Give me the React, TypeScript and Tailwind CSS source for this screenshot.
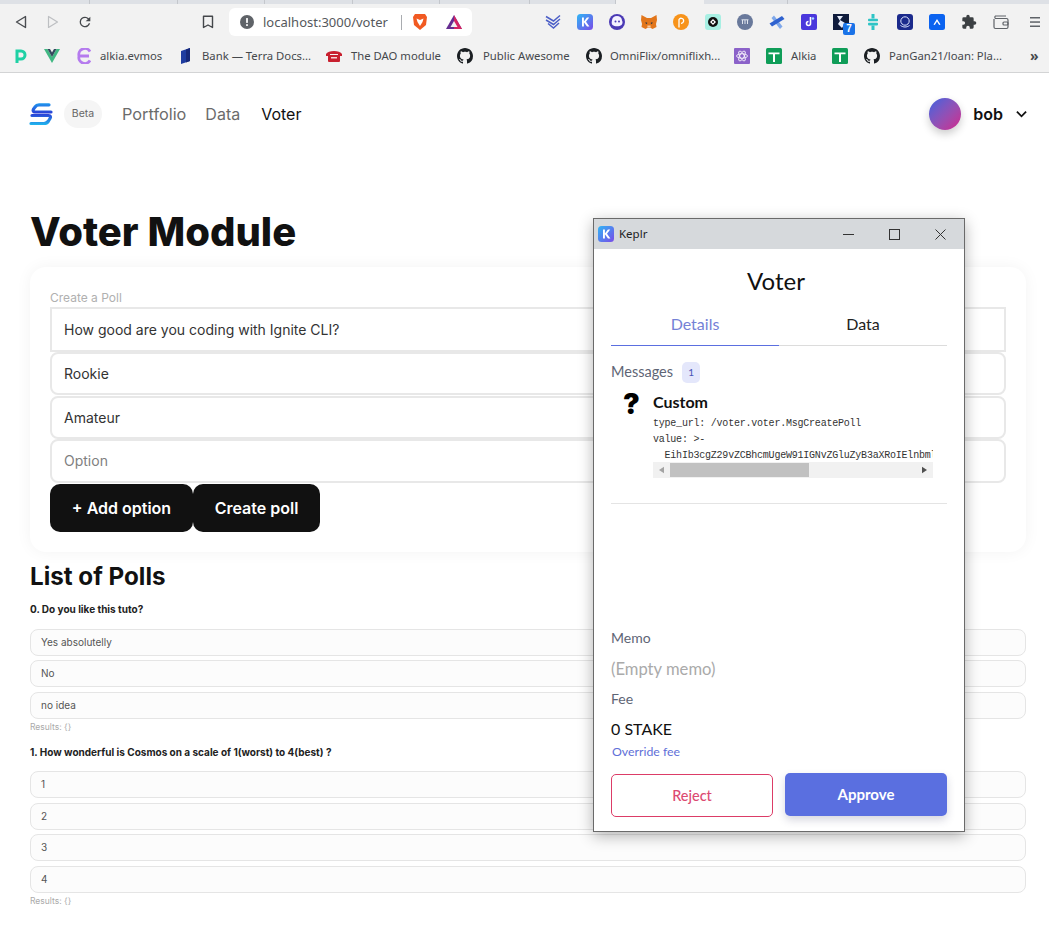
import React from "react";

const Gh = () => (
  <svg viewBox="0 0 16 16" className="w-[16px] h-[16px] shrink-0" fill="#1b1f23">
    <path d="M8 0C3.58 0 0 3.58 0 8c0 3.54 2.29 6.53 5.47 7.59.4.07.55-.17.55-.38 0-.19-.01-.82-.01-1.49-2.01.37-2.53-.49-2.69-.94-.09-.23-.48-.94-.82-1.13-.28-.15-.68-.52-.01-.53.63-.01 1.08.58 1.23.82.72 1.21 1.87.87 2.33.66.07-.52.28-.87.51-1.07-1.78-.2-3.64-.89-3.64-3.95 0-.87.31-1.59.82-2.15-.08-.2-.36-1.02.08-2.12 0 0 .67-.21 2.2.82.64-.18 1.32-.27 2-.27s1.36.09 2 .27c1.53-1.04 2.2-.82 2.2-.82.44 1.1.16 1.92.08 2.12.51.56.82 1.27.82 2.15 0 3.07-1.87 3.75-3.65 3.95.29.25.54.73.54 1.48 0 1.07-.01 1.93-.01 2.2 0 .21.15.46.55.38A8.01 8.01 0 0016 8c0-4.42-3.58-8-8-8z" />
  </svg>
);

const GreenT = () => (
  <svg viewBox="0 0 16 16" className="w-[16px] h-[16px] shrink-0">
    <rect width="16" height="16" rx="1.5" fill="#0f9d58" />
    <path d="M2.500 4.500h11v1.800H9V14H7V6.300H2.500z" fill="#fff" />
  </svg>
);

const KeplrIcon = ({ s, id }: { s: number; id: string }) => (
  <svg viewBox="0 0 16 16" style={{ width: s, height: s }} className="shrink-0">
    <defs>
      <linearGradient id={id} x1="0" y1="0" x2="1" y2="1">
        <stop offset="0" stopColor="#2fb6f5" />
        <stop offset="1" stopColor="#7a4be8" />
      </linearGradient>
    </defs>
    <rect width="16" height="16" rx="3.500" fill={`url(#${id})`} />
    <path d="M5 3.500h1.900v3.900l3-3.900h2.300L9 7.800l3.400 4.700h-2.400L6.900 8.200v4.300H5z" fill="#fff" />
  </svg>
);

const ExtIcons = () => (
  <div className="flex items-center gap-[16px]">
    <svg viewBox="0 0 16 16" className="w-[16px] h-[16px] shrink-0" fill="none" stroke="#4c5fc7" strokeWidth="1.500">
      <path d="M1 2.500 8.500 7 15 1.500M1 6 8.500 10.500 15 5M3 9.500 8.500 14 14 9" />
    </svg>
    <KeplrIcon s={16} id="kg1" />
    <svg viewBox="0 0 16 16" className="w-[16px] h-[16px] shrink-0">
      <circle cx="8" cy="8" r="8" fill="#4b3ab5" />
      <path d="M3 6.500a5 4.500 0 0 1 10 0c1 1.500.5 3.500-.5 4.500-2 1.800-7 1.800-9 0-1-1-1-3-.5-4.500z" fill="#f4f1ff" />
      <circle cx="6.500" cy="7.500" r="1" fill="#4b3ab5" />
      <circle cx="10" cy="7.500" r="1" fill="#4b3ab5" />
    </svg>
    <svg viewBox="0 0 16 16" className="w-[16px] h-[16px] shrink-0">
      <path d="M.500 1 6 4h4l5.500-3L16 6l-1 4 .500 3-4 2-2-1.200H6.500l-2 1.200-4-2 .500-3-1-4z" fill="#e2761b" />
      <path d="M4.500 8l2 1-1.500 1.200zM11.500 8l-2 1 1.500 1.200z" fill="#233447" />
      <path d="M6.500 13.500h3l.200-2H6.300z" fill="#f6c9a0" />
    </svg>
    <svg viewBox="0 0 16 16" className="w-[16px] h-[16px] shrink-0">
      <circle cx="8" cy="8" r="8" fill="#f7931a" />
      <path d="M6 13.500V5.500a2.500 2.500 0 1 1 2 3.800" fill="none" stroke="#fff" strokeWidth="1.300" />
    </svg>
    <svg viewBox="0 0 16 16" className="w-[16px] h-[16px] shrink-0">
      <rect width="16" height="16" rx="3" fill="#a8efe3" />
      <circle cx="8" cy="8" r="5" fill="#111" />
      <path d="M8 5 11 8 8 11 5 8z" fill="#fff" />
      <circle cx="8" cy="8" r="1" fill="#111" />
    </svg>
    <svg viewBox="0 0 16 16" className="w-[16px] h-[16px] shrink-0">
      <circle cx="8" cy="8" r="8" fill="#69799b" />
      <path d="M5.500 6v4M8 6v4M10.500 6v4M4.500 5.800h7" stroke="#dfe4ee" strokeWidth="1" />
    </svg>
    <svg viewBox="0 0 16 16" className="w-[16px] h-[16px] shrink-0">
      <path d="M5 1.500 13.500 12.500 11 15 2.500 4z" fill="#7fa8ea" />
      <path d="M.5 9.500 13 2l2.500 3L3 12.500z" fill="#2f62cf" />
    </svg>
    <svg viewBox="0 0 16 16" className="w-[16px] h-[16px] shrink-0">
      <rect width="16" height="16" rx="2" fill="#4a37dc" />
      <path d="M9.500 3v6.500a2 2 0 1 1-2-2" fill="none" stroke="#fff" strokeWidth="1.600" />
      <circle cx="12" cy="4.500" r="1.200" fill="#a8dcff" />
    </svg>
    <div className="relative w-[16px] h-[16px] shrink-0">
      <svg viewBox="0 0 16 16" className="w-[16px] h-[16px]">
        <rect width="16" height="16" fill="#101c3c" />
        <path d="M4 2h6l-3 4 5 3-3 5-4-4 2-3z" fill="#e8eefb" />
      </svg>
      <div className="absolute left-[10px] top-[9px] w-[12px] h-[12px] rounded-[2px] bg-[#1a73e8] text-white text-[10px] font-bold leading-[12px] text-center font-['Liberation_Sans',sans-serif]">7</div>
    </div>
    <svg viewBox="0 0 16 16" className="w-[16px] h-[16px] shrink-0" fill="#2ec4c6">
      <rect x="6.500" y="0" width="3" height="4.500" />
      <rect x="6.500" y="11.500" width="3" height="4.500" />
      <rect x="3" y="4.700" width="10" height="2.600" rx=".8" />
      <rect x="3" y="8.800" width="10" height="2.600" rx=".8" />
    </svg>
    <svg viewBox="0 0 16 16" className="w-[16px] h-[16px] shrink-0">
      <rect width="16" height="16" rx="3" fill="#1b2a8c" />
      <circle cx="8" cy="7" r="4.200" fill="none" stroke="#dfe6ff" strokeWidth="1" />
      <path d="M3.500 11.500c3 2 6 2 9 0" fill="none" stroke="#dfe6ff" strokeWidth="1" />
    </svg>
    <svg viewBox="0 0 16 16" className="w-[16px] h-[16px] shrink-0">
      <rect width="16" height="16" rx="2.500" fill="#0b63f0" />
      <path d="M4.500 10.500 8 5l3.500 5.500-1.300.4L8 7.500l-2.200 3.400z" fill="#fff" />
    </svg>
    <svg viewBox="0 0 24 24" className="w-[16px] h-[16px] shrink-0" fill="#3c4043">
      <path d="M20.500 11H19V7a2 2 0 0 0-2-2h-4V3.500a2.500 2.500 0 0 0-5 0V5H4a2 2 0 0 0-2 2v3.800h1.500a2.700 2.700 0 0 1 0 5.400H2V20a2 2 0 0 0 2 2h3.800v-1.500a2.700 2.700 0 0 1 5.400 0V22H17a2 2 0 0 0 2-2v-4h1.500a2.500 2.500 0 0 0 0-5z" />
    </svg>
    <svg viewBox="0 0 16 16" className="w-[16px] h-[16px] shrink-0" fill="none" stroke="#5f6368" strokeWidth="1.200">
      <path d="M1 5v8a1.500 1.500 0 0 0 1.500 1.500h11A1.500 1.500 0 0 0 15 13V6a1.500 1.500 0 0 0-1.500-1.500h-11A1.500 1.500 0 0 1 2.500 2H13" />
      <rect x="10" y="8" width="5" height="3" rx="1" />
    </svg>
  </div>
);

const BrowserChrome = () => (
  <div className="font-['Noto_Sans',sans-serif]">
    <div className="h-[4px] bg-[#dee1e6] flex">
      {[90, 88, 87, 88, 87, 90, 86].map((w, i) => (
        <div key={i} style={{ width: w }} className="border-r border-[#c4c7cc] h-full" />
      ))}
      <div className="w-[88px] bg-[#f2f2f2] h-full" />
      <div className="w-[84px] border-r border-[#c4c7cc] h-full" />
    </div>
    <div className="h-[36px] bg-[#f2f2f2] flex items-center pl-[14px] pr-[8px]">
      <svg viewBox="0 0 14 14" className="w-[14px] h-[14px] shrink-0" fill="none" stroke="#4a4d51" strokeWidth="1.400"><path d="M11.500 1.500v11L2.500 7z" strokeLinejoin="round" /></svg>
      <svg viewBox="0 0 14 14" className="w-[14px] h-[14px] ml-[18px] shrink-0" fill="none" stroke="#bdbfc2" strokeWidth="1.200"><path d="M2.500 1.500v11l9-5.500z" strokeLinejoin="round" /></svg>
      <svg viewBox="0 0 24 24" className="w-[16px] h-[16px] ml-[17px] shrink-0" fill="#45484c"><path d="M17.650 6.350A7.960 7.960 0 0 0 12 4a8 8 0 1 0 7.730 10h-2.080A6 6 0 1 1 12 6c1.660 0 3.140.69 4.220 1.780L13 11h7V4z" /></svg>
      <svg viewBox="0 0 12 14" className="w-[12px] h-[14px] ml-[109px] shrink-0" fill="none" stroke="#44474b" strokeWidth="1.400"><path d="M1.500 1.200h9v11.300L6 10l-4.500 2.500z" strokeLinejoin="round" /></svg>
      <div className="ml-[15px] w-[243px] h-[28px] shrink-0 bg-white rounded-[6px] flex items-center pl-[11px]">
        <svg viewBox="0 0 16 16" className="w-[14px] h-[14px] shrink-0"><circle cx="8" cy="8" r="8" fill="#5f6368" /><rect x="7" y="3.500" width="2" height="5.500" fill="#fff" /><rect x="7" y="10.500" width="2" height="2" fill="#fff" /></svg>
        <span className="ml-[9px] w-[125px] text-[13px] leading-none text-[#55585c] whitespace-nowrap">localhost:3000/voter</span>
        <div className="ml-[13px] w-px h-[15px] bg-[#a9acb0] shrink-0" />
        <svg viewBox="0 0 16 18" className="w-[16px] h-[18px] ml-[10px] shrink-0"><path d="M3 1h10l2 3-1 8-6 5-6-5-1-8z" fill="#f15a22" /><path d="M4.500 5.500 8 7l3.500-1.500-1 3.500L8 13 5.500 9z" fill="#fff" /></svg>
        <svg viewBox="0 0 18 16" className="w-[18px] h-[16px] ml-[17px] shrink-0"><path d="M9 1 17 15H1z" fill="#662d91" /><path d="M9 1l8 14H9z" fill="#e0245e" opacity=".9" /><path d="M9 7l3.500 6h-7z" fill="#f2f2f2" /></svg>
      </div>
      <div className="ml-[73px]"><ExtIcons /></div>
      <svg viewBox="0 0 12 12" className="w-[12px] h-[12px] ml-auto shrink-0" fill="#5f6368"><rect x="1" y="1" width="10" height="1.500" /><rect x="1" y="5.300" width="10" height="1.500" /><rect x="1" y="9.500" width="10" height="1.500" /></svg>
    </div>
    <div className="h-[33px] bg-[#f2f2f2] border-b border-[#d3d4d5] flex items-center pl-[14px] text-[11.300px] text-[#45484c] whitespace-nowrap">
      <svg viewBox="0 0 13 16" className="w-[13px] h-[16px] shrink-0" fill="none" stroke="#1fd1a5" strokeWidth="3"><path d="M3 15V3h4a4 4 0 0 1 0 8H4" /></svg>
      <svg viewBox="0 0 16 14" className="w-[16px] h-[14px] ml-[17px] shrink-0"><path d="M0 0h3.500L8 8l4.500-8H16L8 14z" fill="#41b883" /><path d="M3.500 0H6l2 3.500L10 0h2.500L8 8z" fill="#35495e" /></svg>
      <svg viewBox="0 0 14 16" className="w-[14px] h-[16px] ml-[17px] shrink-0" fill="none" stroke="#b57bee" strokeWidth="2.800"><path d="M13 3.500A6 6 0 0 0 2 8a6 6 0 0 0 11 4.500M3 8h9" /></svg>
      <span className="ml-[9px] w-[61px]">alkia.evmos</span>
      <svg viewBox="0 0 12 16" className="w-[12px] h-[16px] ml-[19px] shrink-0"><path d="M1 3l9-3v13l-9 3z" fill="#1f3da0" /><path d="M6 1.500 10 0v13l-4 1.500z" fill="#16297a" /></svg>
      <span className="ml-[10px] w-[108px]">Bank — Terra Docs...</span>
      <svg viewBox="0 0 16 12" className="w-[16px] h-[12px] ml-[16px] shrink-0"><path d="M0 4C2 0 14 0 16 4v2h-4V4H4v2H0z" fill="#c8202f" /><rect x="2" y="5" width="12" height="7" rx="1" fill="#c8202f" /><rect x="5" y="7" width="6" height="1.500" fill="#f7d4d6" /></svg>
      <span className="ml-[9px] w-[91px]">The DAO module</span>
      <div className="ml-[15px]"><Gh /></div>
      <span className="ml-[10px] w-[87px]">Public Awesome</span>
      <div className="ml-[16px]"><Gh /></div>
      <span className="ml-[8px] w-[108px]">OmniFlix/omniflixh...</span>
      <svg viewBox="0 0 16 16" className="w-[16px] h-[16px] ml-[16px] shrink-0" fill="none"><rect width="16" height="16" rx="1" fill="#8b62c9" /><ellipse cx="8" cy="8" rx="5.500" ry="2.200" stroke="#fff" strokeWidth=".8" /><ellipse cx="8" cy="8" rx="5.500" ry="2.200" stroke="#fff" strokeWidth=".8" transform="rotate(60 8 8)" /><ellipse cx="8" cy="8" rx="5.500" ry="2.200" stroke="#fff" strokeWidth=".8" transform="rotate(120 8 8)" /></svg>
      <div className="ml-[16px]"><GreenT /></div>
      <span className="ml-[9px] w-[25px]">Alkia</span>
      <div className="ml-[16px]"><GreenT /></div>
      <div className="ml-[16px]"><Gh /></div>
      <span className="ml-[9px] w-[109px]">PanGan21/loan: Pla...</span>
      <span className="ml-[32px] text-[14px] font-bold leading-none text-[#45484c]">»</span>
    </div>
  </div>
);

const Logo = () => (
  <svg viewBox="0 0 26 26" className="w-[26px] h-[26px] shrink-0" fill="none" strokeLinecap="round" strokeWidth="3.200">
    <defs>
      <linearGradient id="la" gradientUnits="userSpaceOnUse" x1="0" y1="2" x2="0" y2="12">
        <stop offset="0" stopColor="#1f9aee" />
        <stop offset="1" stopColor="#2a3fd6" />
      </linearGradient>
      <linearGradient id="lb" gradientUnits="userSpaceOnUse" x1="0" y1="13" x2="0" y2="24">
        <stop offset="0" stopColor="#2a3fd6" />
        <stop offset="1" stopColor="#20b8ee" />
      </linearGradient>
    </defs>
    <path d="M21 3.800H11C9 3.800 8 4.500 7 6L5.500 8C4.500 9.800 5.500 11 7 11H23" stroke="url(#la)" />
    <path d="M4 14.500H20.500C22.500 14.500 23 16 22 17.500L20.500 20C19.500 21.500 18.500 22.500 16 22.500H3" stroke="url(#lb)" />
  </svg>
);

const Header = () => (
  <div className="h-[82px] flex items-center pl-[28px] pr-[20px]">
    <Logo />
    <div className="ml-[10px] w-[38px] h-[28px] rounded-full bg-[#f5f5f5] flex items-center justify-center text-[10.500px] text-[#666]">Beta</div>
    <span className="ml-[20px] text-[16.300px] text-[#6b6b6b]">Portfolio</span>
    <span className="ml-[19px] text-[16px] text-[#6b6b6b]">Data</span>
    <span className="ml-[21px] text-[16px] text-[#111]">Voter</span>
    <div className="ml-auto flex items-center">
      <div className="w-[32px] h-[32px] rounded-full bg-gradient-to-br from-[#2f5ee0] to-[#d0128c] shadow-[0_4px_8px_rgba(0,0,0,0.2)]" />
      <span className="ml-[12px] text-[16px] font-semibold text-[#111]">bob</span>
      <svg viewBox="0 0 12 8" className="w-[11px] h-[8px] ml-[13px] mr-[2px]" fill="none" stroke="#111" strokeWidth="2"><path d="M1 1.500 6 6.500 11 1.500" /></svg>
    </div>
  </div>
);

const fieldText = "text-[14px] text-[#333]";

const Form = () => (
  <div className="ml-[30px] w-[996px] h-[285px] rounded-[16px] shadow-[0_0_16px_rgba(0,0,0,0.05)] px-[20px] pt-[22px]">
    <div className="text-[12px] leading-[18px] text-[#b0b0b0]">Create a Poll</div>
    <div className={"h-[45px] border-2 border-[#e8e8e8] flex items-center pl-[12px] pb-[1px] " + fieldText}>How good are you coding with Ignite CLI?</div>
    <div className={"h-[43px] border-2 border-[#e8e8e8] rounded-[8px] flex items-center pl-[12px] pb-[1px] " + fieldText}>Rookie</div>
    <div className={"h-[43px] mt-[1px] border-2 border-[#e8e8e8] rounded-[8px] flex items-center pl-[12px] pb-[1px] " + fieldText}>Amateur</div>
    <div className="h-[44px] border-2 border-[#e8e8e8] rounded-[8px] flex items-center pl-[12px] pb-[1px] text-[14px] text-[#808080]">Option</div>
    <div className="flex mt-[1px]">
      <div className="w-[143px] h-[48px] rounded-[10px] bg-[#111] text-white text-[16px] font-semibold flex items-center justify-center">+ Add option</div>
      <div className="w-[127px] h-[48px] rounded-[10px] bg-[#111] text-white text-[16px] font-semibold flex items-center justify-center">Create poll</div>
    </div>
  </div>
);

const Option = ({ label }: { label: string }) => (
  <div className="h-[27px] rounded-[8px] border border-[#e5e5e5] bg-[#fcfcfc] flex items-center pl-[10px] text-[10px] text-[#555]">{label}</div>
);

const Poll = ({ title, options }: { title: string; options: string[] }) => (
  <div>
    <div className="text-[10px] leading-[14px] font-bold text-[#222]">{title}</div>
    <div className="mt-[12.500px] flex flex-col gap-[4.500px]">
      {options.map((o) => <Option key={o} label={o} />)}
    </div>
    <div className="text-[8.500px] leading-[12px] mt-[2px] text-[#aaa]">Results: {"{}"}</div>
  </div>
);

const Keplr = () => (
  <div className="absolute left-[593px] top-[218px] w-[372px] h-[614px] bg-white border border-[#6a6a6a] shadow-[0_4px_14px_rgba(0,0,0,0.3)] flex flex-col font-['Lato','Noto_Sans',sans-serif]">
    <div className="h-[30px] bg-[#d6d9dc] flex items-center pl-[4px] shrink-0">
      <KeplrIcon s={16} id="kg2" />
      <span className="ml-[5px] text-[11.500px] text-[#222] font-['Noto_Sans',sans-serif]">Keplr</span>
      <svg viewBox="0 0 11 11" className="w-[11px] h-[11px] ml-auto" fill="none" stroke="#333" strokeWidth="1"><path d="M0 5.500h11" /></svg>
      <svg viewBox="0 0 11 11" className="w-[11px] h-[11px] ml-[35px]" fill="none" stroke="#333" strokeWidth="1"><rect x=".5" y=".5" width="10" height="10" /></svg>
      <svg viewBox="0 0 11 11" className="w-[11px] h-[11px] ml-[35px] mr-[18px]" fill="none" stroke="#333" strokeWidth="1"><path d="M.5.5l10 10M10.500.5l-10 10" /></svg>
    </div>
    <div className="flex-1 px-[17px] flex flex-col">
      <div className="text-center text-[24px] leading-[32px] mt-[16px] pr-[6px] text-[#111]">Voter</div>
      <div className="flex mt-[7px] h-[42px]">
        <div className="flex-1 border-b border-[#5b6fe0] flex items-center justify-center pb-[1px] text-[16px] text-[#7481d6]">Details</div>
        <div className="flex-1 border-b border-[#dcdcdc] flex items-center justify-center pb-[1px] text-[16px] text-[#222]">Data</div>
      </div>
      <div className="flex items-center mt-[15px] h-[22px]">
        <span className="text-[14.500px] text-[#5e6575]">Messages</span>
        <span className="ml-[9px] w-[18px] h-[21px] rounded-[5px] bg-[#e4e7fb] text-[10px] text-[#4a55b5] flex items-center justify-center">1</span>
      </div>
      <div className="flex mt-[6px] pl-[12px]">
        <span className="w-[30px] text-[28px] leading-[30px] font-black text-black font-['Inter',sans-serif]">?</span>
        <div className="w-[280px]">
          <div className="text-[16px] leading-[20px] font-bold text-[#111] mt-[3px]">Custom</div>
          <div className="mt-[4px] -mb-[2px] overflow-hidden whitespace-pre font-['Liberation_Mono','DejaVu_Sans_Mono',monospace] text-[10px] tracking-[-0.22px] leading-[16px] text-[#333]">
            <div>type_url: /voter.voter.MsgCreatePoll</div>
            <div>value: &gt;-</div>
            <div>  EihIb3cgZ29vZCBhcmUgeW91IGNvZGluZyB3aXRoIElnbml0</div>
          </div>
          <div className="h-[16px] bg-[#f1f1f1] flex items-center">
            <svg viewBox="0 0 6 8" className="w-[5px] h-[8px] ml-[6px]" fill="#a3a3a3"><path d="M6 0v8L0 4z" /></svg>
            <div className="ml-[6px] w-[139px] h-[14px] bg-[#c1c1c1]" />
            <svg viewBox="0 0 6 8" className="w-[5px] h-[8px] ml-auto mr-[6px]" fill="#505050"><path d="M0 0v8l6-4z" /></svg>
          </div>
        </div>
      </div>
      <div className="mt-[25px] border-t border-[#e4e4e4]" />
      <div className="mt-[125px] text-[14px] leading-[18px] text-[#5e6575]">Memo</div>
      <div className="mt-[12px] text-[16.600px] leading-[20px] text-[#aaa]">(Empty memo)</div>
      <div className="mt-[11px] text-[14px] leading-[18px] text-[#5e6575]">Fee</div>
      <div className="mt-[11px] text-[16px] leading-[20px] text-[#111]">0 STAKE</div>
      <div className="mt-[6px] pl-[1px] text-[12.300px] leading-[14px] text-[#5f70d8]">Override fee</div>
      <div className="flex gap-[12px] mt-[14px]">
        <div className="w-[162px] h-[43px] mt-[1px] rounded-[5px] border border-[#dc3c67] flex items-center justify-center text-[14.500px] font-medium text-[#dc4a72]">Reject</div>
        <div className="w-[162px] h-[43px] rounded-[5px] bg-[#5a6fe0] shadow-[0_4px_8px_rgba(50,50,93,0.2)] flex items-center justify-center text-[15px] font-bold text-white">Approve</div>
      </div>
    </div>
  </div>
);

export default function App() {
  return (
    <div className="relative w-[1049px] h-[928px] overflow-hidden bg-white font-['Inter',sans-serif]">
      <BrowserChrome />
      <Header />
      <h1 className="mt-[53px] ml-[30px] text-[40px] leading-[48px] font-extrabold text-[#111]">Voter Module</h1>
      <div className="mt-[11px]"><Form /></div>
      <h2 className="mt-[10px] ml-[30px] text-[24.200px] leading-[30px] font-bold text-[#111]">List of Polls</h2>
      <div className="ml-[30px] w-[996px] mt-[10px]">
        <Poll title="0. Do you like this tuto?" options={["Yes absolutelly", "No", "no idea"]} />
        <div className="mt-[12px]">
          <Poll title="1. How wonderful is Cosmos on a scale of 1(worst) to 4(best) ?" options={["1", "2", "3", "4"]} />
        </div>
      </div>
      <Keplr />
    </div>
  );
}
